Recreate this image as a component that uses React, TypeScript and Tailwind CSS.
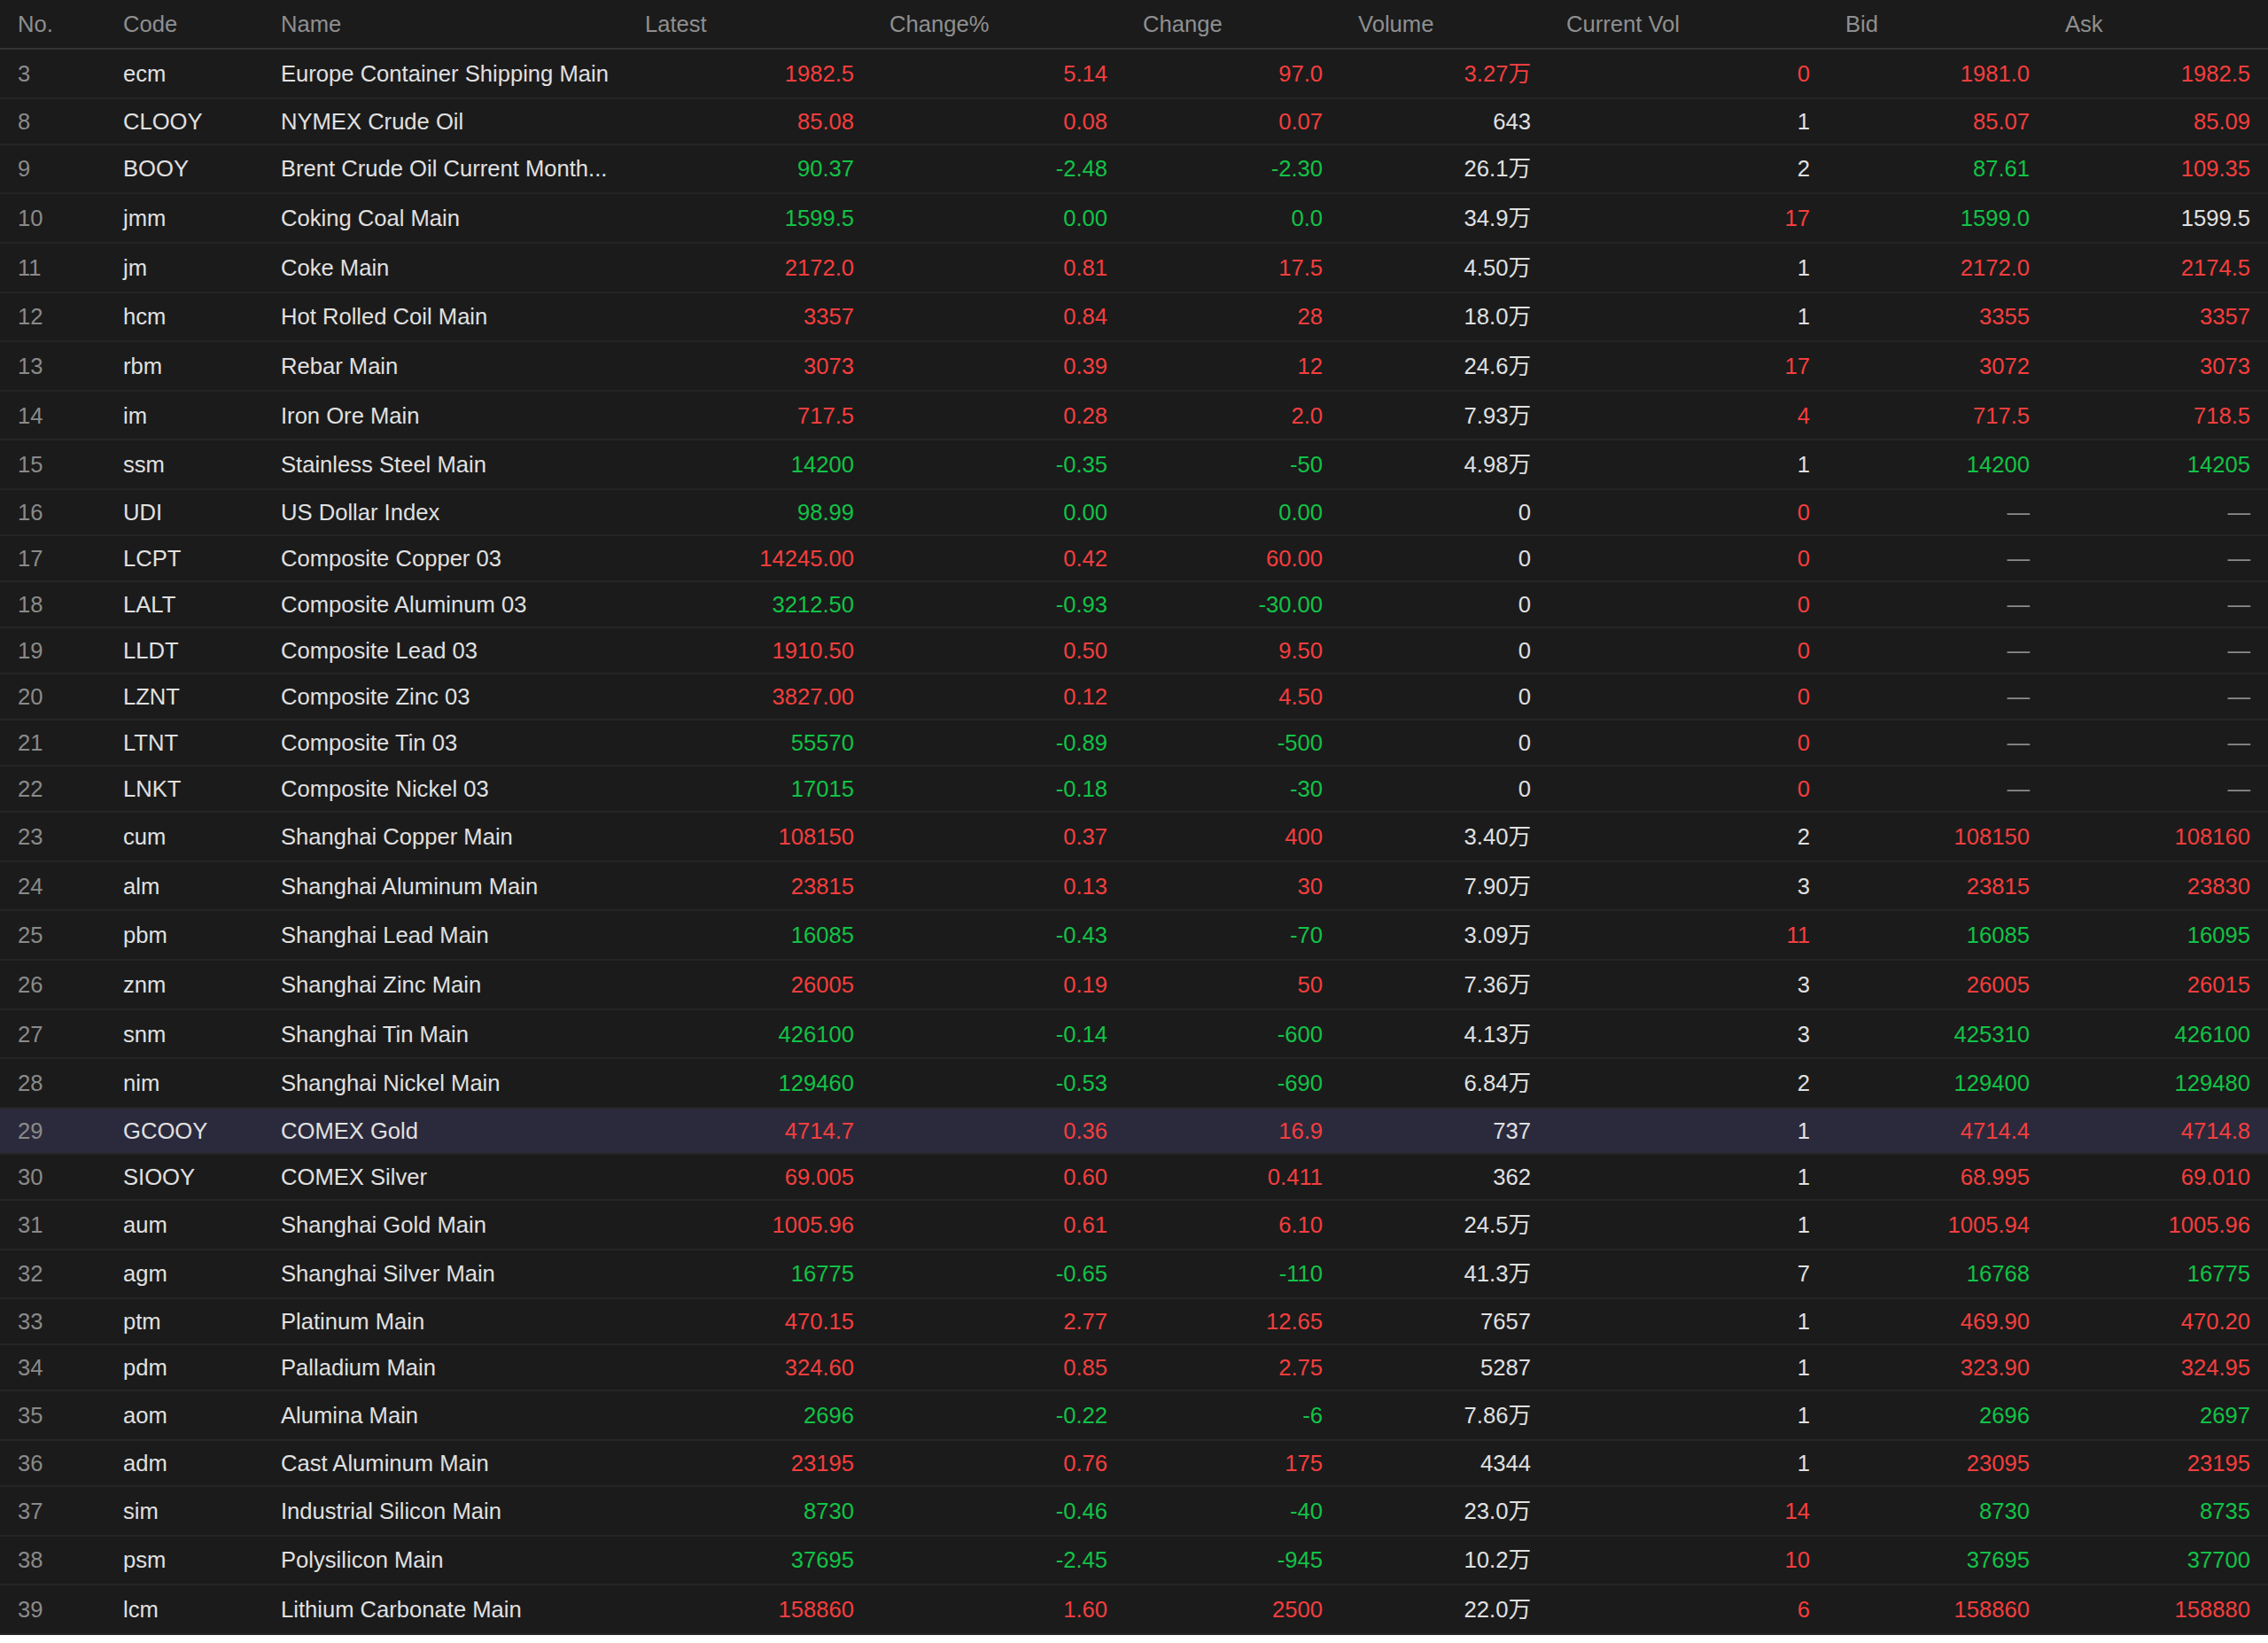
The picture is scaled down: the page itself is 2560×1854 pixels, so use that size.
import React from "react";

type Row = [string, string, string, string, string, string, string, string, string, string, string];

// columns: no, code, name, colors (latest..ask), latest, change%, change, volume, current vol, bid, ask
const rows: Row[] = [
  ["3", "ecm", "Europe Container Shipping Main", "rrrrrrr", "1982.5", "5.14", "97.0", "3.27万", "0", "1981.0", "1982.5"],
  ["8", "CLOOY", "NYMEX Crude Oil", "rrrwwrr", "85.08", "0.08", "0.07", "643", "1", "85.07", "85.09"],
  ["9", "BOOY", "Brent Crude Oil Current Month...", "gggwwgr", "90.37", "-2.48", "-2.30", "26.1万", "2", "87.61", "109.35"],
  ["10", "jmm", "Coking Coal Main", "gggwrgw", "1599.5", "0.00", "0.0", "34.9万", "17", "1599.0", "1599.5"],
  ["11", "jm", "Coke Main", "rrrwwrr", "2172.0", "0.81", "17.5", "4.50万", "1", "2172.0", "2174.5"],
  ["12", "hcm", "Hot Rolled Coil Main", "rrrwwrr", "3357", "0.84", "28", "18.0万", "1", "3355", "3357"],
  ["13", "rbm", "Rebar Main", "rrrwrrr", "3073", "0.39", "12", "24.6万", "17", "3072", "3073"],
  ["14", "im", "Iron Ore Main", "rrrwrrr", "717.5", "0.28", "2.0", "7.93万", "4", "717.5", "718.5"],
  ["15", "ssm", "Stainless Steel Main", "gggwwgg", "14200", "-0.35", "-50", "4.98万", "1", "14200", "14205"],
  ["16", "UDI", "US Dollar Index", "gggwrdd", "98.99", "0.00", "0.00", "0", "0", "—", "—"],
  ["17", "LCPT", "Composite Copper 03", "rrrwrdd", "14245.00", "0.42", "60.00", "0", "0", "—", "—"],
  ["18", "LALT", "Composite Aluminum 03", "gggwrdd", "3212.50", "-0.93", "-30.00", "0", "0", "—", "—"],
  ["19", "LLDT", "Composite Lead 03", "rrrwrdd", "1910.50", "0.50", "9.50", "0", "0", "—", "—"],
  ["20", "LZNT", "Composite Zinc 03", "rrrwrdd", "3827.00", "0.12", "4.50", "0", "0", "—", "—"],
  ["21", "LTNT", "Composite Tin 03", "gggwrdd", "55570", "-0.89", "-500", "0", "0", "—", "—"],
  ["22", "LNKT", "Composite Nickel 03", "gggwrdd", "17015", "-0.18", "-30", "0", "0", "—", "—"],
  ["23", "cum", "Shanghai Copper Main", "rrrwwrr", "108150", "0.37", "400", "3.40万", "2", "108150", "108160"],
  ["24", "alm", "Shanghai Aluminum Main", "rrrwwrr", "23815", "0.13", "30", "7.90万", "3", "23815", "23830"],
  ["25", "pbm", "Shanghai Lead Main", "gggwrgg", "16085", "-0.43", "-70", "3.09万", "11", "16085", "16095"],
  ["26", "znm", "Shanghai Zinc Main", "rrrwwrr", "26005", "0.19", "50", "7.36万", "3", "26005", "26015"],
  ["27", "snm", "Shanghai Tin Main", "gggwwgg", "426100", "-0.14", "-600", "4.13万", "3", "425310", "426100"],
  ["28", "nim", "Shanghai Nickel Main", "gggwwgg", "129460", "-0.53", "-690", "6.84万", "2", "129400", "129480"],
  ["29", "GCOOY", "COMEX Gold", "rrrwwrr", "4714.7", "0.36", "16.9", "737", "1", "4714.4", "4714.8"],
  ["30", "SIOOY", "COMEX Silver", "rrrwwrr", "69.005", "0.60", "0.411", "362", "1", "68.995", "69.010"],
  ["31", "aum", "Shanghai Gold Main", "rrrwwrr", "1005.96", "0.61", "6.10", "24.5万", "1", "1005.94", "1005.96"],
  ["32", "agm", "Shanghai Silver Main", "gggwwgg", "16775", "-0.65", "-110", "41.3万", "7", "16768", "16775"],
  ["33", "ptm", "Platinum Main", "rrrwwrr", "470.15", "2.77", "12.65", "7657", "1", "469.90", "470.20"],
  ["34", "pdm", "Palladium Main", "rrrwwrr", "324.60", "0.85", "2.75", "5287", "1", "323.90", "324.95"],
  ["35", "aom", "Alumina Main", "gggwwgg", "2696", "-0.22", "-6", "7.86万", "1", "2696", "2697"],
  ["36", "adm", "Cast Aluminum Main", "rrrwwrr", "23195", "0.76", "175", "4344", "1", "23095", "23195"],
  ["37", "sim", "Industrial Silicon Main", "gggwrgg", "8730", "-0.46", "-40", "23.0万", "14", "8730", "8735"],
  ["38", "psm", "Polysilicon Main", "gggwrgg", "37695", "-2.45", "-945", "10.2万", "10", "37695", "37700"],
  ["39", "lcm", "Lithium Carbonate Main", "rrrwrrr", "158860", "1.60", "2500", "22.0万", "6", "158860", "158880"],
];

const headers = ["No.", "Code", "Name", "Latest", "Change%", "Change", "Volume", "Current Vol", "Bid", "Ask"];

const cols =
  "grid grid-cols-[119px_178px_411px_276px_286px_243px_235px_315px_248px_249px] items-center";

const tone: Record<string, string> = {
  r: "text-[#f43e3e]",
  g: "text-[#12c247]",
  w: "text-[#e0e0e0]",
  d: "text-[#8a8a8a]",
};

export default function App() {
  return (
    <div
      className="w-[2560px] bg-[#1b1b1b] text-[25.6px] leading-[30px]"
      style={{ fontFamily: '"Liberation Sans", "Noto Sans CJK SC", sans-serif' }}
    >
      <div className={`${cols} h-[56px] border-b-2 border-[#333333] text-[#8f8f8f]`}>
        {headers.map((h) => (
          <div key={h} className="px-[20px] whitespace-nowrap">
            {h}
          </div>
        ))}
      </div>

      {rows.map((r) => {
        const [no, code, name, colors, ...nums] = r;
        const tall = nums[3].includes("万");
        const active = no === "29";
        return (
          <div
            key={no}
            className={`${cols} border-b-2 border-[#252525] ${tall ? "h-[55.65px]" : "h-[52px]"} ${
              active ? "bg-[#2b2a3c]" : ""
            }`}
          >
            <div className="px-[20px] text-[#8a8a8a]">{no}</div>
            <div className="px-[20px] text-[#e0e0e0] whitespace-nowrap">{code}</div>
            <div className="px-[20px] text-[#e0e0e0] whitespace-nowrap overflow-hidden">{name}</div>
            {nums.map((v, i) => (
              <div key={i} className={`px-[20px] text-right whitespace-nowrap ${tone[colors[i]]}`}>
                {v}
              </div>
            ))}
          </div>
        );
      })}
    </div>
  );
}
